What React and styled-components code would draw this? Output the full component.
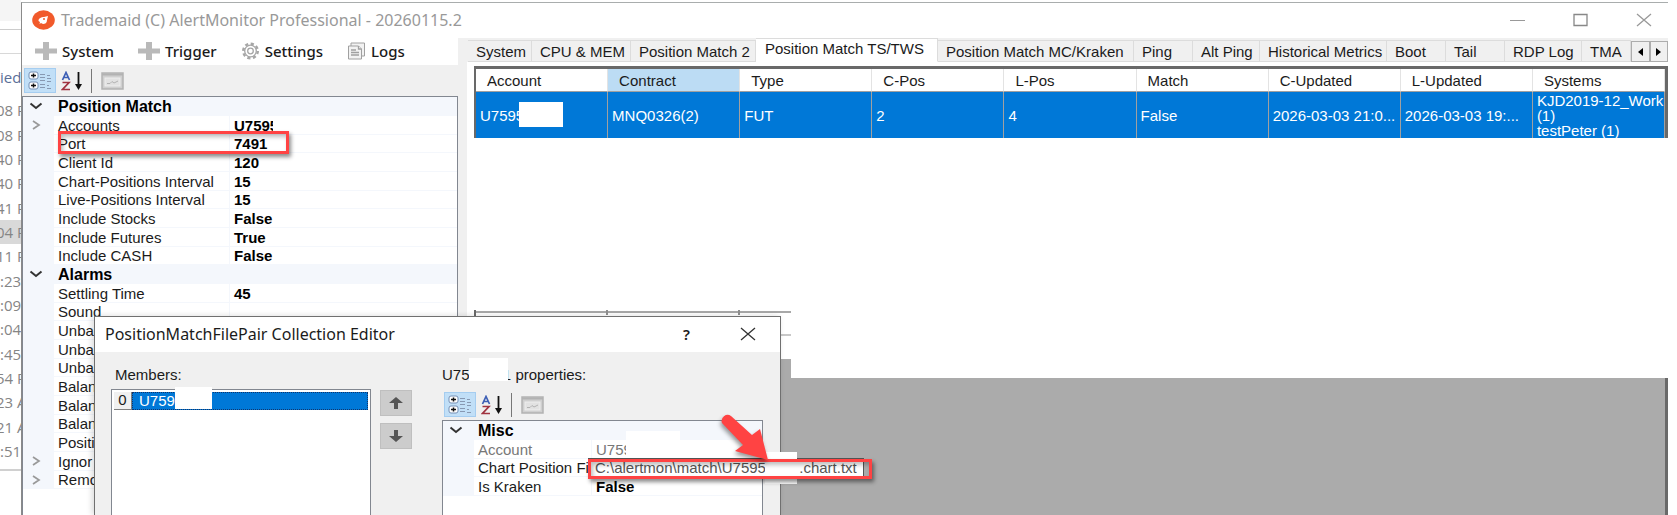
import React from 'react';
import styled, { createGlobalStyle, css } from 'styled-components';

const GlobalStyle = createGlobalStyle`
  * {
    box-sizing: border-box;
  }
  body {
    margin: 0;
    background: #ffffff;
    color: #1b1b1b;
    font-family: 'Liberation Sans', Arial, sans-serif;
    font-size: 15px;
  }
  button,
  input {
    font: inherit;
    color: inherit;
  }
`;

const Screen = styled.div`
  position: relative;
  display: flex;
  height: 100vh;
  overflow: hidden;
`;

/* window behind the application */

const BackWindow = styled.aside`
  flex: 0 0 21px;
  padding-top: 29px;
  overflow: hidden;
  color: #858585;
  font-family: 'Open Sans', sans-serif;
  font-size: 15px;
  background: linear-gradient(#f5f5f5 21px, #ffffff 21px);
`;

const BackBar = styled.div`
  height: 25px;
  border-top: 1px solid #cccccc;
  border-bottom: 1px solid #d8d8d8;
`;

const BackHeading = styled.div`
  height: 44px;
  line-height: 46px;
  color: #5a6f98;
`;

const BackRow = styled.div`
  height: 24px;
  line-height: 24px;
  text-indent: ${({ $wide }) => ($wide ? '-4px' : 0)};
  white-space: nowrap;
  background: ${({ $selected }) => ($selected ? '#d9d9d9' : 'transparent')};
  &:nth-child(3n) {
    height: 25px;
  }
`;

const BackFooter = styled.div`
  margin-top: 6px;
  border-top: 2px solid #d0d0d0;
`;

/* main window */

const AppWindow = styled.main`
  flex: 1;
  min-width: 0;
  display: flex;
  flex-direction: column;
  margin: 2px 9px 0 0;
  border-top: 1px solid #a9adad;
  border-left: 1px solid #8a8a8a;
`;

const TitleBar = styled.header`
  display: flex;
  align-items: center;
  height: 35px;
  padding: 0 16px 2px 10px;
  color: #999999;
`;

const Title = styled.h1`
  flex: 1;
  margin: 0 0 0 6px;
  font-family: 'Noto Sans', sans-serif;
  font-size: 16px;
  font-weight: 400;
`;

const WindowButtons = styled.div`
  display: flex;
  gap: 48px;
`;

const PlainButton = styled.button`
  display: flex;
  align-items: center;
  gap: 5px;
  padding: 0;
  border: 0;
  background: none;
  white-space: nowrap;
`;

const Main = styled.div`
  flex: 1;
  min-height: 0;
  display: flex;
`;

const LeftPane = styled.section`
  flex: 0 0 445px;
  display: flex;
  flex-direction: column;
  padding-right: 9px;
  background: #f0f0f0;
`;

const MenuBar = styled.nav`
  flex: none;
  display: flex;
  align-items: center;
  gap: 24px;
  height: 27px;
  padding: 0 0 2px 13px;
  background: #ffffff;
  font-family: 'Noto Sans', sans-serif;
  font-weight: 500;
`;

const GridToolbar = styled.div`
  flex: none;
  display: flex;
  align-items: center;
  height: ${({ $height }) => $height}px;
  padding-left: 2px;
`;

const ToolButton = styled.button`
  display: flex;
  align-items: center;
  justify-content: center;
  width: 32px;
  height: 25px;
  padding: 0;
  border: 1px solid ${({ $active }) => ($active ? '#a5cdf0' : 'transparent')};
  background: ${({ $active }) => ($active ? '#c1dff7' : 'none')};
`;

const ToolDivider = styled.div`
  width: 1px;
  height: 24px;
  margin: 0 4px 0 3px;
  background: #777777;
`;

const PropertyPanel = styled.div`
  flex: 1;
  min-height: 0;
  overflow: hidden;
  border: 1px solid #828790;
  border-bottom: 0;
  background: #ffffff;
`;

const PropertyTable = styled.table`
  width: 100%;
  table-layout: fixed;
  border-collapse: separate;
  border-spacing: 0;
`;

const PropertyRow = styled.tr`
  height: 19px;
  line-height: 17px;
  color: ${({ $muted }) => ($muted ? '#777777' : 'inherit')};
  background: ${({ $category }) => ($category ? '#f4f7fc' : '#ffffff')};
  &:nth-child(3n) {
    height: 18px;
  }
  th,
  td {
    padding: 0 0 0 4px;
    overflow: hidden;
    border-bottom: 1px solid #f4f7fc;
    text-align: left;
    font-weight: 400;
    white-space: nowrap;
  }
  th + td {
    border-left: 1px solid #f4f7fc;
    color: ${({ $muted }) => ($muted ? '#777777' : '#000000')};
    font-weight: ${({ $muted }) => ($muted ? 400 : 700)};
  }
  th[colspan] {
    color: #000000;
    font-size: 16px;
    font-weight: 700;
  }
`;

const Gutter = styled.td`
  && {
    padding: 0 0 0 6px;
    background: #f4f7fc;
  }
  svg {
    display: block;
  }
`;

/* right pane */

const RightPane = styled.section`
  flex: 1;
  min-width: 0;
  display: flex;
  flex-direction: column;
`;

const TabStrip = styled.div`
  flex: none;
  display: flex;
  align-items: flex-end;
  height: 24px;
  padding-left: 1px;
  background: #f0f0f0;
`;

const Tab = styled.button`
  flex: 0 0 ${({ $width }) => $width}px;
  height: 22px;
  padding: 0 0 0 8px;
  overflow: hidden;
  border: 1px solid #dcdcdc;
  border-width: 1px 1px 1px 0;
  background: #f0f0f0;
  text-align: left;
  white-space: nowrap;
  ${({ $active }) =>
    $active &&
    css`
      height: 24px;
      padding: 0 0 3px 9px;
      border-bottom-color: #ffffff;
      background: #ffffff;
    `}
`;

const TabScroll = styled.div`
  display: flex;
  flex: 1;
  height: 21px;
`;

const TabScrollButton = styled.button`
  flex: 1;
  padding: 0;
  border: 1px solid #adadad;
  background: #f0f0f0;
  color: #000000;
  svg {
    display: block;
    margin: auto;
  }
`;

const Workspace = styled.div`
  flex: 1;
  min-height: 0;
  display: flex;
  flex-direction: column;
  margin: 4px 0 0 7px;
  border: 3px solid #696969;
  border-width: 3px 3px 0 2px;
  background: #ababab;
`;

const PositionTable = styled.table`
  width: 100%;
  table-layout: fixed;
  border-collapse: separate;
  border-spacing: 0;
  background: #ffffff;
`;

const HeadCell = styled.th`
  height: 23px;
  padding: 0 0 0 11px;
  border-right: 1px solid #e3e3e3;
  border-bottom: 1px solid #a0a0a0;
  background: ${({ $sorted }) => ($sorted ? '#bcdcf4' : '#ffffff')};
  text-align: left;
  font-weight: 400;
`;

const Cell = styled.td`
  height: 46px;
  padding: 0 0 0 4px;
  overflow: hidden;
  border-right: 1px solid #a0a0a0;
  background: #0078d7;
  color: #ffffff;
  line-height: 15px;
  white-space: nowrap;
`;

const EmptyRows = styled.div`
  height: 221px;
  padding-top: 171px;
  background: #ffffff;
`;

const EmptyTicks = styled.div`
  display: grid;
  grid-template-columns: repeat(9, 1fr);
  height: 6px;
  background: linear-gradient(transparent 2px, #a8a8a8 2px, #a8a8a8 4px, transparent 4px);
  span {
    border-right: 2px solid #8f8f8f;
  }
`;

const EmptyLine = styled.div`
  height: 21px;
  border-bottom: 2px solid #c8c8c8;
`;

/* dialog */

const Dialog = styled.section`
  position: absolute;
  top: 316px;
  left: 94px;
  bottom: 0;
  width: 687px;
  display: flex;
  flex-direction: column;
  border: 1px solid #707070;
  border-bottom: 0;
  background: #f0f0f0;
  box-shadow: -2px 0 6px rgba(0, 0, 0, 0.15);
`;

const DialogBar = styled.header`
  flex: none;
  display: flex;
  align-items: center;
  height: 35px;
  padding: 0 24px 2px 10px;
  background: #ffffff;
  font-family: 'Noto Sans', sans-serif;
`;

const DialogTitle = styled.h2`
  flex: 1;
  margin: 0;
  font-size: 16px;
  font-weight: 400;
`;

const DialogButtons = styled.div`
  display: flex;
  align-items: center;
  gap: 50px;
  font-weight: 600;
`;

const DialogBody = styled.div`
  flex: 1;
  min-height: 0;
  display: flex;
  padding: 14px 17px 0 16px;
`;

const Column = styled.div`
  display: flex;
  flex-direction: column;
  flex: ${({ $grow }) => ($grow ? '1' : '0 0 260px')};
`;

const Label = styled.div`
  flex: none;
  height: 23px;
  padding-left: ${({ $indent }) => ($indent ? 4 : 0)}px;
  line-height: 17px;
`;

const Members = styled.ul`
  flex: 1;
  margin: 0;
  padding: 2px;
  border: 1px solid #828790;
  border-bottom: 0;
  background: #ffffff;
  list-style: none;
`;

const Member = styled.li`
  display: flex;
  height: 18px;
  line-height: 16px;
`;

const MemberIndex = styled.span`
  width: 18px;
  border-right: 1px solid #808080;
  border-bottom: 1px solid #808080;
  background: #f0f0f0;
  text-align: center;
`;

const MemberName = styled.span`
  flex: 1;
  padding-left: 6px;
  border: 1px dotted #12356b;
  background: #0078d7;
  color: #ffffff;
  line-height: 15px;
`;

const MoveButtons = styled.div`
  display: flex;
  flex-direction: column;
  gap: 7px;
  padding: 24px 30px 0 9px;
`;

const MoveButton = styled.button`
  display: flex;
  align-items: center;
  justify-content: center;
  width: 32px;
  height: 26px;
  padding: 0;
  border: 1px solid #bfbfbf;
  background: #cccccc;
`;

const PathInput = styled.input`
  position: absolute;
  top: 458px;
  left: 588px;
  width: 276px;
  height: 19px;
  padding: 0 6px;
  border: 1px solid #555555;
  background: #ffffff;
  color: #555555;
`;

/* marks drawn on top */

const Redaction = styled.div`
  position: absolute;
  top: ${({ $top }) => $top}px;
  left: ${({ $left }) => $left}px;
  width: ${({ $width }) => $width}px;
  height: ${({ $height }) => $height}px;
  background: #ffffff;
`;

const WideRedaction = styled(Redaction)`
  right: 0;
  width: auto;
`;

const Highlight = styled.div`
  position: absolute;
  top: ${({ $top }) => $top}px;
  left: ${({ $left }) => $left}px;
  width: ${({ $width }) => $width}px;
  height: ${({ $height }) => $height}px;
  border: 3px solid #ff4343;
  box-shadow: 2px 3px 4px rgba(0, 0, 0, 0.45), inset 2px 3px 4px rgba(0, 0, 0, 0.25);
`;

const Arrow = styled.svg`
  position: absolute;
  top: 410px;
  left: 718px;
  filter: drop-shadow(-1px 3px 2px rgba(0, 0, 0, 0.4));
`;

const LogoIcon = () => (
  <svg width="23" height="20" viewBox="0 0 23 20">
    <ellipse cx="11.500" cy="10" rx="11.300" ry="9.700" fill="#f15a2b" />
    <path d="M6.500 11c0-3 3-4 5.500-4l4-1-1 4c0 3-2 4-4 4l-2-1-1.500 1 .5-2z" fill="#fff" />
    <circle cx="12" cy="9" r="1" fill="#f15a2b" />
  </svg>
);

const PlusIcon = () => (
  <svg width="22" height="20" viewBox="0 0 22 20">
    <path d="M8 1h6v6.500h8v5h-8V19H8v-6.500H0v-5h8z" fill="#b9b9b9" />
  </svg>
);

const GearIcon = () => (
  <svg width="19" height="18" viewBox="0 0 19 18" fill="none" stroke="#a6a6a6">
    <circle cx="9.500" cy="9" r="7.300" strokeWidth="2.400" strokeDasharray="3.200 2.530" />
    <circle cx="9.500" cy="9" r="5.800" strokeWidth="1.300" />
    <circle cx="9.500" cy="9" r="2.800" strokeWidth="1.300" />
  </svg>
);

const LogsIcon = () => (
  <svg width="19" height="18" viewBox="0 0 19 18" fill="#f2f2f2" stroke="#a0a0a0">
    <path d="M4 4V1h13.500v13h-2.500" />
    <path d="M1.500 4h10l3 3v10h-13z" />
    <path d="M11.500 4v3h3M4 8h5M4 10.500h8M4 13h8" strokeWidth="1.300" />
  </svg>
);

const CategorizedIcon = () => (
  <svg width="24" height="20" viewBox="0 0 24 20" fill="none">
    <rect x="1" y="1" width="9" height="7" rx="2" fill="#fff" stroke="#7590b5" />
    <rect x="1" y="11" width="9" height="7" rx="2" fill="#fff" stroke="#7590b5" />
    <path d="M3 4.500h5M5.500 2.500v4M3 14.500h5M5.500 12.500v4" stroke="#111" strokeWidth="1.500" />
    <path
      d="M12 3.500h5M12 6.500h5M12 9.500h5M12 13.500h5M12 16.500h5M19 4.500h3M19 7.500h4M19 10.500h4M19 14.500h2M19 17.500h4"
      stroke="#8798b2"
    />
  </svg>
);

const SortIcon = () => (
  <svg width="22" height="20" viewBox="0 0 22 20" fill="none">
    <path d="M1.500 9L5 1.500 8.500 9M3 6.500h4" stroke="#3d5fb5" strokeWidth="1.700" />
    <path d="M1.500 11.500H8L1.500 18.500h7.500" stroke="#a03340" strokeWidth="1.700" />
    <path d="M17.500 1v13" stroke="#111" strokeWidth="1.800" />
    <path d="M14 13h7l-3.500 6z" fill="#111" />
  </svg>
);

const PagesIcon = () => (
  <svg width="23" height="18" viewBox="0 0 23 18" fill="none" stroke="#b2b2b2">
    <rect x="1" y="1" width="21" height="16" fill="#cfcfcf" strokeWidth="1.500" />
    <path d="M1 2.500h21" strokeWidth="2" />
    <rect x="4" y="6" width="15" height="8" fill="#e2e2e2" stroke="#eeeeee" />
    <path d="M6 11.500h3l2-2 2 1.500 4-2" />
  </svg>
);

const Chevron = ({ open }) => (
  <svg width="14" height="12" viewBox="0 0 14 12" fill="none">
    {open ? (
      <path d="M1.500 3.500L7 8l5.500-4.500" stroke="#333" strokeWidth="2" />
    ) : (
      <path d="M4 2l6 4-6 4" stroke="#999" strokeWidth="1.700" />
    )}
  </svg>
);

const CloseIcon = ({ color }) => (
  <svg width="16" height="14" viewBox="0 0 16 14">
    <path d="M1 1l14 12M15 1L1 13" stroke={color} strokeWidth="1.300" />
  </svg>
);

const ArrowIcon = ({ down }) => (
  <svg width="14" height="12" viewBox="0 0 14 12">
    <path d={down ? 'M7 12l7-6H9V0H5v6H0z' : 'M7 0l7 6H9v6H5V6H0z'} fill="#555" />
  </svg>
);

const backRows = ['08 P', '08 P', '40 P', '40 P', '41 P', '04 P', '11 P', ':23', ':09', ':04', ':45', '54 P', '23 A', '21 A', ':51'];

const properties = [
  { category: 'Position Match' },
  { name: 'Accounts', value: 'U7595', expandable: true },
  { name: 'Port', value: '7491' },
  { name: 'Client Id', value: '120' },
  { name: 'Chart-Positions Interval', value: '15' },
  { name: 'Live-Positions Interval', value: '15' },
  { name: 'Include Stocks', value: 'False' },
  { name: 'Include Futures', value: 'True' },
  { name: 'Include CASH', value: 'False' },
  { category: 'Alarms' },
  { name: 'Settling Time', value: '45' },
  { name: 'Sound' },
  { name: 'Unba' },
  { name: 'Unba' },
  { name: 'Unba' },
  { name: 'Balan' },
  { name: 'Balan' },
  { name: 'Balan' },
  { name: 'Positi' },
  { name: 'Ignor', expandable: true },
  { name: 'Remo', expandable: true }
];

const memberProperties = [
  { category: 'Misc' },
  { name: 'Account', value: 'U7595', muted: true },
  { name: 'Chart Position Fil' },
  { name: 'Is Kraken', value: 'False' }
];

const tabs = [
  ['System', 64],
  ['CPU & MEM', 99],
  ['Position Match 2', 125],
  ['Position Match TS/TWS', 182],
  ['Position Match MC/Kraken', 196],
  ['Ping', 59],
  ['Alt Ping', 67],
  ['Historical Metrics', 127],
  ['Boot', 59],
  ['Tail', 59],
  ['RDP Log', 77],
  ['TMA', 49]
];

const columns = ['Account', 'Contract', 'Type', 'C-Pos', 'L-Pos', 'Match', 'C-Updated', 'L-Updated', 'Systems'];

const cells = ['U7595', 'MNQ0326(2)', 'FUT', '2', '4', 'False', '2026-03-03 21:0...', '2026-03-03 19:...'];

const chartPath = 'C:\\alertmon\\match\\U7595\u00a0\u00a0\u00a0\u00a0\u00a0\u00a0\u00a0\u00a0.chart.txt';

function PropertyToolbar({ height }) {
  return (
    <GridToolbar $height={height}>
      <ToolButton $active aria-label="Categorized">
        <CategorizedIcon />
      </ToolButton>
      <ToolButton aria-label="Alphabetical">
        <SortIcon />
      </ToolButton>
      <ToolDivider />
      <ToolButton aria-label="Property Pages" disabled>
        <PagesIcon />
      </ToolButton>
    </GridToolbar>
  );
}

function PropertyGrid({ items, nameWidth }) {
  return (
    <PropertyPanel>
      <PropertyTable>
        <colgroup>
          <col width="31" />
          <col width={nameWidth} />
          <col />
        </colgroup>
        <tbody>
          {items.map((item, index) => (
            <PropertyRow key={index} $category={!!item.category} $muted={item.muted}>
              <Gutter>{(item.category || item.expandable) && <Chevron open={!!item.category} />}</Gutter>
              {item.category ? (
                <th colSpan="2">{item.category}</th>
              ) : (
                <>
                  <th>{item.name}</th>
                  <td>{item.value}</td>
                </>
              )}
            </PropertyRow>
          ))}
        </tbody>
      </PropertyTable>
    </PropertyPanel>
  );
}

function PositionGrid() {
  return (
    <PositionTable>
      <thead>
        <tr>
          {columns.map(column => (
            <HeadCell key={column} $sorted={column === 'Contract'}>
              {column}
            </HeadCell>
          ))}
        </tr>
      </thead>
      <tbody>
        <tr>
          {cells.map((cell, index) => (
            <Cell key={index}>{cell}</Cell>
          ))}
          <Cell>
            KJD2019-12_Work
            <br />
            (1)
            <br />
            testPeter (1)
          </Cell>
        </tr>
      </tbody>
    </PositionTable>
  );
}

function CollectionEditor() {
  return (
    <Dialog>
      <DialogBar>
        <DialogTitle>PositionMatchFilePair Collection Editor</DialogTitle>
        <DialogButtons>
          <PlainButton>?</PlainButton>
          <PlainButton aria-label="Close">
            <CloseIcon color="#333" />
          </PlainButton>
        </DialogButtons>
      </DialogBar>
      <DialogBody>
        <Column>
          <Label $indent>Members:</Label>
          <Members>
            <Member>
              <MemberIndex>0</MemberIndex>
              <MemberName>U7595</MemberName>
            </Member>
          </Members>
        </Column>
        <MoveButtons>
          <MoveButton aria-label="Move up">
            <ArrowIcon />
          </MoveButton>
          <MoveButton aria-label="Move down">
            <ArrowIcon down />
          </MoveButton>
        </MoveButtons>
        <Column $grow>
          <Label>U7595&nbsp;&nbsp;&nbsp;&nbsp;1 properties:</Label>
          <PropertyToolbar height={31} />
          <PropertyGrid items={memberProperties} nameWidth="117" />
        </Column>
      </DialogBody>
    </Dialog>
  );
}

function App() {
  return (
    <Screen>
      <GlobalStyle />
      <BackWindow>
        <BackBar />
        <BackHeading>ied</BackHeading>
        {backRows.map((row, index) => (
          <BackRow key={index} $wide={row.length > 3} $selected={index === 5}>
            {row}
          </BackRow>
        ))}
        <BackFooter />
      </BackWindow>

      <AppWindow>
        <TitleBar>
          <LogoIcon />
          <Title>Trademaid (C) AlertMonitor Professional - 20260115.2</Title>
          <WindowButtons>
            <PlainButton aria-label="Minimize">
              <svg width="15" height="14">
                <path d="M0 7.500h15" stroke="#999" />
              </svg>
            </PlainButton>
            <PlainButton aria-label="Maximize">
              <svg width="15" height="14">
                <path d="M1 1.500h13v11H1z" fill="none" stroke="#888" strokeWidth="1.300" />
              </svg>
            </PlainButton>
            <PlainButton aria-label="Close">
              <CloseIcon color="#999" />
            </PlainButton>
          </WindowButtons>
        </TitleBar>
        <Main>
          <LeftPane>
            <MenuBar>
              <PlainButton>
                <PlusIcon />
                System
              </PlainButton>
              <PlainButton>
                <PlusIcon />
                Trigger
              </PlainButton>
              <PlainButton>
                <GearIcon />
                Settings
              </PlainButton>
              <PlainButton>
                <LogsIcon />
                Logs
              </PlainButton>
            </MenuBar>
            <PropertyToolbar height={31} />
            <PropertyGrid items={properties} nameWidth="175" />
          </LeftPane>
          <RightPane>
            <TabStrip>
              {tabs.map(([name, width]) => (
                <Tab key={name} $width={width} $active={name === 'Position Match TS/TWS'}>
                  {name}
                </Tab>
              ))}
              <TabScroll>
                <TabScrollButton aria-label="Scroll left">
                  <svg width="5" height="8">
                    <path d="M5 0v8L0 4z" />
                  </svg>
                </TabScrollButton>
                <TabScrollButton aria-label="Scroll right">
                  <svg width="5" height="8">
                    <path d="M0 0v8l5-4z" />
                  </svg>
                </TabScrollButton>
              </TabScroll>
            </TabStrip>
            <Workspace>
              <PositionGrid />
              <EmptyRows>
                <EmptyTicks>
                  {columns.map(column => (
                    <span key={column} />
                  ))}
                </EmptyTicks>
                <EmptyLine />
              </EmptyRows>
            </Workspace>
          </RightPane>
        </Main>
      </AppWindow>

      <WideRedaction $top={138} $left={472} $height={172} />
      <WideRedaction $top={310} $left={791} $height={68} />
      <CollectionEditor />
      <PathInput aria-label="Chart Position File" defaultValue={chartPath} />

      <Redaction $top={119} $left={273} $width={40} $height={14} />
      <Redaction $top={102} $left={519} $width={44} $height={25} />
      <Redaction $top={387} $left={175} $width={37} $height={22} />
      <Redaction $top={358} $left={469} $width={39} $height={23} />
      <Redaction $top={431} $left={626} $width={54} $height={27} />
      <Redaction $top={452} $left={765} $width={32} $height={32} />
      <Highlight $top={131} $left={58} $width={231} $height={23} />
      <Highlight $top={459} $left={588} $width={284} $height={20} />
      <Arrow width="56" height="54" viewBox="0 0 56 54">
        <path d="M4 13a6 6 0 0 1 9-7L34 25l8-6 8 31-33-9 8-6z" fill="#ff4343" />
      </Arrow>
    </Screen>
  );
}

export default App;
